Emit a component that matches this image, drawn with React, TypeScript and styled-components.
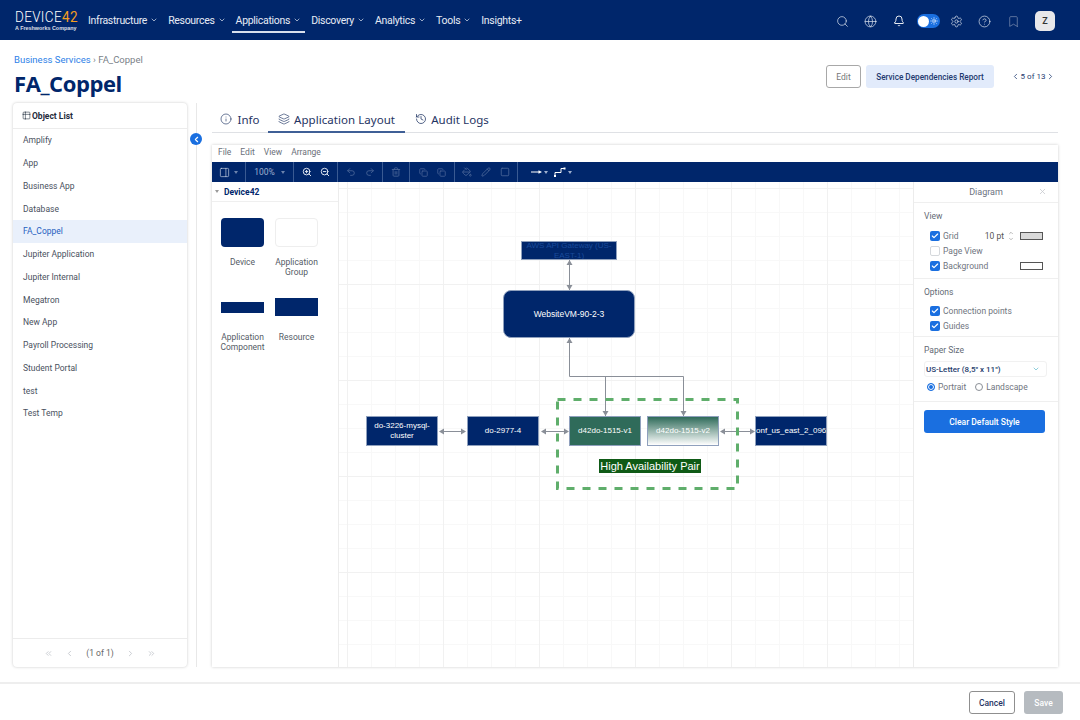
import React from "react";
import styled, { createGlobalStyle } from "styled-components";
import {
  Search,
  Globe,
  Bell,
  Settings,
  CircleHelp,
  Bookmark,
  ChevronDown,
  ChevronUp,
  ChevronLeft,
  ChevronRight,
  ChevronsLeft,
  ChevronsRight,
  Info,
  Layers,
  History,
  ZoomIn,
  ZoomOut,
  Undo2,
  Redo2,
  Trash2,
  Copy,
  PaintBucket,
  Pencil,
  Square,
  PanelRight,
  Check,
  X,
  Table2,
  Sun,
} from "lucide-react";

const navy = "#00266b";

const GlobalStyle = createGlobalStyle`
  html, body { margin: 0; padding: 0; background: #fff; overflow: hidden; }
  body { font-family: "Roboto", "Liberation Sans", sans-serif; }
  * { box-sizing: border-box; }
`;

const Page = styled.div`
  width: 1080px;
  height: 720px;
  display: flex;
  flex-direction: column;
  color: #4a5568;
`;

const Header = styled.header`
  height: 40px;
  flex: none;
  background: ${navy};
  display: flex;
  align-items: center;
  padding: 2px 25px 0 15px;
`;

const Logo = styled.div`
  width: 68px;
  color: #fff;
  display: flex;
  flex-direction: column;
  margin-top: -1px;
`;

const LogoMark = styled.div`
  font-family: "Roboto", sans-serif;
  font-weight: 300;
  font-size: 15.5px;
  line-height: 14px;
  letter-spacing: 0.4px;
  white-space: nowrap;
  transform: scaleX(0.87);
  transform-origin: left center;
  span { color: #f59e1f; font-weight: 400; }
`;

const LogoSub = styled.div`
  font-family: "Liberation Sans", sans-serif;
  font-size: 5.4px;
  line-height: 8px;
  font-weight: 700;
  opacity: 0.85;
  white-space: nowrap;
`;

const Nav = styled.nav`
  margin-left: 1px;
  display: flex;
  align-items: center;
  gap: 2px;
  height: 100%;
`;

const NavItem = styled.div<{ $active?: boolean }>`
  height: 24px;
  padding: 0 4px;
  display: flex;
  align-items: center;
  gap: 3px;
  color: #e6ebf5;
  font-family: "Roboto", sans-serif;
  font-size: 10.5px;
  letter-spacing: -0.3px;
  white-space: nowrap;
  border-bottom: 2px solid ${(p) => (p.$active ? "#d8dfec" : "transparent")};
`;

const HeaderIcons = styled.div`
  margin-left: auto;
  display: flex;
  align-items: center;
  gap: 15.5px;
  color: #dbe2ee;
`;

const Toggle = styled.div`
  width: 23px;
  height: 14px;
  border-radius: 7px;
  background: #1a6fe0;
  display: flex;
  align-items: center;
  justify-content: space-between;
  padding: 0 2px 0 1px;
  color: #fff;
  margin: 0 -5.5px 0 -3.5px;
`;

const ToggleKnob = styled.span`
  width: 11px;
  height: 11px;
  border-radius: 50%;
  background: #fff;
`;

const Avatar = styled.div`
  width: 20px;
  height: 20px;
  border-radius: 5px;
  background: #e8e8ea;
  color: #333;
  font-size: 9px;
  font-weight: 600;
  display: flex;
  align-items: center;
  justify-content: center;
`;

const Content = styled.main`
  flex: 1;
  min-height: 0;
  padding: 14px 22px 15px 13px;
  display: flex;
  flex-direction: column;
`;

const TitleRow = styled.div`
  height: 49px;
  flex: none;
  display: flex;
  justify-content: space-between;
  align-items: flex-start;
`;

const Breadcrumb = styled.div`
  padding-left: 1px;
  font-size: 9.5px;
  line-height: 12px;
  color: #7a7f88;
  a { color: #2d7fe8; text-decoration: none; }
`;

const Title = styled.h1`
  margin: 3px 0 0 1px;
  font-family: "Open Sans", sans-serif;
  font-size: 22px;
  line-height: 28px;
  font-weight: 700;
  letter-spacing: -0.4px;
  color: ${navy};
`;

const PageActions = styled.div`
  display: flex;
  align-items: center;
  margin-top: 11px;
  margin-right: 3px;
`;

const EditButton = styled.button`
  width: 35px;
  height: 23px;
  background: #fff;
  border: 1px solid #a8a8a8;
  border-radius: 3px;
  color: #777;
  font-family: inherit;
  font-size: 8.5px;
  padding: 0;
`;

const ReportButton = styled.button`
  width: 128px;
  height: 23px;
  margin-left: 5px;
  background: #e2ebfb;
  border: 0;
  border-radius: 3px;
  color: #1f3a70;
  font-family: inherit;
  font-size: 8.2px;
  font-weight: 500;
  padding: 0;
`;

const Pager = styled.div`
  width: 44px;
  margin-left: 17px;
  display: flex;
  align-items: center;
  justify-content: space-between;
  font-size: 8px;
  color: #1f3a70;
  white-space: nowrap;
`;

const Main = styled.div`
  flex: 1;
  min-height: 0;
  display: flex;
`;

const Sidebar = styled.aside`
  width: 174px;
  flex: none;
  display: flex;
  flex-direction: column;
  border-radius: 4px;
  background: #fff;
  box-shadow: 0 0 3px rgba(0, 0, 0, 0.22);
`;

const SidebarTitle = styled.div`
  height: 26px;
  flex: none;
  padding-left: 9px;
  display: flex;
  align-items: center;
  gap: 1px;
  border-bottom: 1px solid #ececec;
  color: #1e2a3a;
  font-size: 8.5px;
  font-weight: 700;
`;

const ObjectList = styled.ul`
  list-style: none;
  margin: 0;
  padding: 0;
  flex: 1;
`;

const ObjectRow = styled.li<{ $active?: boolean }>`
  height: 22.75px;
  padding-left: 10px;
  display: flex;
  align-items: center;
  font-size: 8.5px;
  color: ${(p) => (p.$active ? "#1f5fbf" : "#4a5160")};
  background: ${(p) => (p.$active ? "#e9f0fb" : "transparent")};
`;

const SidebarPager = styled.div`
  height: 29px;
  flex: none;
  border-top: 1px solid #ececec;
  display: flex;
  align-items: center;
  justify-content: center;
  gap: 11.5px;
  color: #b9bdc4;
  font-size: 8.5px;
  span { color: #666; margin: 0 1px; }
`;

const Divider = styled.div`
  position: relative;
  width: 25px;
  flex: none;
  &::after {
    content: "";
    position: absolute;
    left: 8.5px;
    top: 0;
    bottom: 0;
    width: 1px;
    background: #e8e8e8;
  }
`;

const CollapseButton = styled.div`
  position: absolute;
  z-index: 1;
  left: 3px;
  top: 30px;
  width: 12px;
  height: 12px;
  border-radius: 50%;
  background: #1a6fe0;
  color: #fff;
  display: flex;
  align-items: center;
  justify-content: center;
`;

const Workspace = styled.section`
  flex: 1;
  min-width: 0;
  display: flex;
  flex-direction: column;
`;

const Tabs = styled.div`
  height: 31px;
  flex: none;
  margin-top: -1px;
  display: flex;
  border-bottom: 1px solid #dfe1e5;
`;

const Tab = styled.div<{ $active?: boolean; $width: number; $gap: number }>`
  width: ${(p) => p.$width}px;
  padding-top: 5px;
  display: flex;
  align-items: center;
  justify-content: center;
  gap: ${(p) => p.$gap}px;
  margin-bottom: -1px;
  font-family: "Noto Sans", sans-serif;
  font-size: 11.5px;
  letter-spacing: 0.05px;
  color: #1f3463;
  border-bottom: 2px solid ${(p) => (p.$active ? "#3f5f96" : "transparent")};
`;

const Editor = styled.div`
  flex: 1;
  min-height: 0;
  margin-top: 12px;
  display: flex;
  flex-direction: column;
  background: #fff;
  box-shadow: 0 0 3px rgba(0, 0, 0, 0.2);
`;

const MenuBar = styled.div`
  height: 17px;
  flex: none;
  padding: 0 0 3px 6px;
  display: flex;
  align-items: center;
  gap: 9px;
  font-size: 8.5px;
  color: #6b7079;
`;

const Toolbar = styled.div`
  height: 20px;
  flex: none;
  background: ${navy};
  display: flex;
  align-items: center;
  color: #c7d2e6;
`;

const ToolGroup = styled.div<{ $width: number; $dim?: boolean; $gap?: number }>`
  width: ${(p) => p.$width}px;
  height: 100%;
  display: flex;
  align-items: center;
  justify-content: center;
  gap: ${(p) => p.$gap ?? 9}px;
  font-size: 8.5px;
  border-right: 1px solid #3a5a92;
  color: ${(p) => (p.$dim ? "#4b6699" : "#dfe5f1")};
  &:last-child { border-right: 0; }
`;

const ToolPair = styled.span`
  display: flex;
  align-items: center;
  gap: 2px;
`;

const ZoomLabel = styled.span`
  color: #9fb0cf;
`;

const ToolCaret = styled.span<{ $muted?: boolean }>`
  width: 0;
  height: 0;
  border-left: 2.5px solid transparent;
  border-right: 2.5px solid transparent;
  border-top: 3px solid ${(p) => (p.$muted ? "#6d84ad" : "#9fb0cf")};
`;

const EditorBody = styled.div`
  flex: 1;
  min-height: 0;
  display: flex;
`;

const Palette = styled.div`
  width: 127px;
  flex: none;
  border-right: 1px solid #ececec;
`;

const PaletteHead = styled.div`
  height: 20px;
  display: flex;
  align-items: center;
  gap: 5px;
  padding-left: 3px;
  border-bottom: 1px solid #efefef;
  font-size: 8.5px;
  font-weight: 700;
  color: ${navy};
`;

const Caret = styled.span`
  width: 0;
  height: 0;
  border-left: 2.5px solid transparent;
  border-right: 2.5px solid transparent;
  border-top: 3px solid #999;
`;

const ShapeGrid = styled.div`
  display: grid;
  grid-template-columns: 43px 43px;
  column-gap: 11px;
  padding: 15px 0 0 9px;
`;

const ShapeCell = styled.div<{ $height: number }>`
  height: ${(p) => p.$height}px;
  display: flex;
  flex-direction: column;
  align-items: center;
`;

const ShapeSlot = styled.div`
  height: 30px;
  width: 100%;
  display: flex;
  align-items: center;
`;

const Shape = styled.div<{ $height: number; $radius?: number; $blank?: boolean }>`
  width: 100%;
  height: ${(p) => p.$height}px;
  border-radius: ${(p) => p.$radius ?? 0}px;
  background: ${(p) => (p.$blank ? "#fff" : navy)};
  border: ${(p) => (p.$blank ? "1px solid #eeeeee" : "0")};
`;

const ShapeLabel = styled.div`
  margin-top: 10px;
  width: 60px;
  text-align: center;
  font-size: 8.5px;
  line-height: 10px;
  color: #555b66;
`;

const Canvas = styled.div`
  position: relative;
  flex: 1;
  min-width: 0;
  overflow: hidden;
  background-color: #fff;
  background-image:
    linear-gradient(#f1f1f1 1px, transparent 1px),
    linear-gradient(90deg, #f1f1f1 1px, transparent 1px),
    linear-gradient(#f8f8f8 1px, transparent 1px),
    linear-gradient(90deg, #f8f8f8 1px, transparent 1px);
  background-size: 96px 96px, 96px 96px, 24px 24px, 24px 24px;
  background-position: 0 6px, 8px 0, 0 6px, 8px 0;
`;

const Wires = styled.svg`
  position: absolute;
  left: 0;
  top: 0;
`;

const Node = styled.div<{
  $x: number;
  $y: number;
  $w: number;
  $h: number;
  $fill?: string;
  $radius?: number;
  $tone?: string;
  $size?: number;
  $flush?: boolean;
}>`
  position: absolute;
  left: ${(p) => p.$x}px;
  top: ${(p) => p.$y}px;
  width: ${(p) => p.$w}px;
  height: ${(p) => p.$h}px;
  background: ${(p) => p.$fill ?? navy};
  border: 1px solid #8fa0bd;
  border-radius: ${(p) => p.$radius ?? 0}px;
  color: ${(p) => p.$tone ?? "#fff"};
  font-family: "Liberation Sans", sans-serif;
  font-size: ${(p) => p.$size ?? 8}px;
  line-height: 10px;
  display: flex;
  align-items: center;
  justify-content: ${(p) => (p.$flush ? "flex-start" : "center")};
  text-align: center;
  overflow: hidden;
  white-space: ${(p) => (p.$flush ? "nowrap" : "normal")};
`;

const HaLabel = styled.div`
  position: absolute;
  left: 260px;
  top: 277px;
  width: 102px;
  height: 14px;
  background: #0f5a16;
  color: #fff;
  font-family: "Liberation Sans", sans-serif;
  font-size: 11px;
  line-height: 14px;
  text-align: center;
  white-space: nowrap;
`;

const Inspector = styled.div`
  width: 145px;
  flex: none;
  border-left: 1px solid #ececec;
  font-size: 8.5px;
  color: #6f7580;
`;

const InspectorHead = styled.div`
  position: relative;
  height: 21px;
  display: flex;
  align-items: center;
  justify-content: center;
  border-bottom: 1px solid #efefef;
  color: #6b7280;
  font-size: 9px;
`;

const CloseIcon = styled.span`
  position: absolute;
  right: 11px;
  top: 5px;
  color: #c4c7cc;
`;

const Section = styled.div<{ $height: number }>`
  height: ${(p) => p.$height}px;
  padding: 8px 10px 0;
  border-bottom: 1px solid #efefef;
  &:last-child { border-bottom: 0; }
`;

const SectionTitle = styled.div<{ $tight?: boolean }>`
  height: 10px;
  line-height: 10px;
  font-size: 8.5px;
  color: #636a75;
  margin-bottom: ${(p) => (p.$tight ? 6 : 7)}px;
`;

const CheckRow = styled.div`
  height: 15px;
  padding: 0 5px 0 6px;
  display: flex;
  align-items: center;
  gap: 3px;
`;

const Box = styled.span<{ $on?: boolean }>`
  width: 10px;
  height: 10px;
  border-radius: 2px;
  flex: none;
  display: flex;
  align-items: center;
  justify-content: center;
  color: #fff;
  background: ${(p) => (p.$on ? "#1a6fe0" : "#fff")};
  border: ${(p) => (p.$on ? "0" : "1px solid #d5d8dc")};
`;

const Spacer = styled.span`
  flex: 1;
`;

const PtValue = styled.span`
  font-size: 8.5px;
  color: #555;
  margin-right: 1px;
`;

const Stepper = styled.span`
  display: flex;
  flex-direction: column;
  color: #777;
  margin-right: 3px;
`;

const Swatch = styled.span<{ $fill: string }>`
  width: 23px;
  height: 8px;
  border: 1px solid #555;
  background: ${(p) => p.$fill};
  flex: none;
`;

const PaperSelect = styled.div`
  height: 16px;
  width: 123px;
  margin-top: -1px;
  display: flex;
  align-items: center;
  justify-content: space-between;
  padding: 0 6px 0 1px;
  border: 1px solid #f1f1f1;
  border-radius: 3px;
  color: #243b6b;
  font-size: 8px;
  font-weight: 500;
  svg { color: #56b7c9; }
`;

const RadioRow = styled.div`
  margin-top: 3px;
  padding-left: 3px;
  display: flex;
  align-items: center;
  gap: 3px;
  height: 14px;
`;

const Radio = styled.span<{ $on?: boolean }>`
  width: 8px;
  height: 8px;
  border-radius: 50%;
  border: 1px solid ${(p) => (p.$on ? "#1a6fe0" : "#8a8f96")};
  box-shadow: ${(p) => (p.$on ? "inset 0 0 0 1px #fff" : "none")};
  background: ${(p) => (p.$on ? "#1a6fe0" : "#fff")};
  flex: none;
  margin-left: ${(p) => (p.$on ? "0" : "6px")};
`;

const ClearButton = styled.button`
  display: block;
  width: 121px;
  height: 23px;
  background: #1a6fe0;
  border: 0;
  border-radius: 3px;
  color: #fff;
  font-family: inherit;
  font-size: 8.5px;
  font-weight: 500;
  padding: 0;
`;

const Footer = styled.footer`
  height: 38px;
  flex: none;
  border-top: 2px solid #eeeeee;
  padding: 7px 17px 0 0;
  display: flex;
  justify-content: flex-end;
  gap: 9px;
`;

const CancelButton = styled.button`
  width: 46px;
  height: 23px;
  background: #fff;
  border: 1px solid #8f8f8f;
  border-radius: 3px;
  color: #1f3463;
  font-family: inherit;
  font-size: 8.5px;
  font-weight: 500;
  padding: 0;
`;

const SaveButton = styled.button`
  width: 39px;
  height: 23px;
  background: #b6bbc0;
  border: 0;
  border-radius: 3px;
  color: #fff;
  font-family: inherit;
  font-size: 8.5px;
  font-weight: 500;
  padding: 0;
`;

const navItems = [
  { label: "Infrastructure", caret: true },
  { label: "Resources", caret: true },
  { label: "Applications", caret: true, active: true },
  { label: "Discovery", caret: true },
  { label: "Analytics", caret: true },
  { label: "Tools", caret: true },
  { label: "Insights+", caret: false },
];

const objects = [
  "Amplify",
  "App",
  "Business App",
  "Database",
  "FA_Coppel",
  "Jupiter Application",
  "Jupiter Internal",
  "Megatron",
  "New App",
  "Payroll Processing",
  "Student Portal",
  "test",
  "Test Temp",
];

const Arrow = ({ d }: { d: string }) => (
  <path d={d} fill="#8a8f98" stroke="none" />
);

const TickedBox = () => (
  <Box $on>
    <Check size={8} strokeWidth={3.5} />
  </Box>
);

// the arrow and elbow connector glyphs of the drawing toolbar
const StraightEdge = () => (
  <svg width="11" height="8" viewBox="0 0 11 8">
    <path d="M0 4h8" stroke="#fff" strokeWidth="1" />
    <path d="M11 4L7.5 2.2v3.6z" fill="#fff" />
  </svg>
);

const ElbowEdge = () => (
  <svg width="12" height="10" viewBox="0 0 12 10">
    <path d="M1 9V5.5h6V1.5h3" fill="none" stroke="#fff" strokeWidth="1" />
    <rect x="0" y="8" width="2" height="2" fill="#fff" />
    <rect x="9.5" y="0.5" width="2" height="2" fill="#fff" />
  </svg>
);

const App: React.FC = () => {
  return (
    <Page>
      <GlobalStyle />
      <Header>
        <Logo>
          <LogoMark>
            DEVICE<span>42</span>
          </LogoMark>
          <LogoSub>A Freshworks Company</LogoSub>
        </Logo>
        <Nav>
          {navItems.map((item) => (
            <NavItem key={item.label} $active={item.active}>
              {item.label}
              {item.caret && <ChevronDown size={8} strokeWidth={2} />}
            </NavItem>
          ))}
        </Nav>
        <HeaderIcons>
          <Search size={13} strokeWidth={1.3} />
          <Globe size={13} strokeWidth={1.3} />
          <Bell size={12} strokeWidth={1.8} color="#fff" />
          <Toggle>
            <ToggleKnob />
            <Sun size={8} strokeWidth={2} />
          </Toggle>
          <Settings size={13} strokeWidth={1.3} />
          <CircleHelp size={13} strokeWidth={1.3} />
          <Bookmark size={13} strokeWidth={1.3} color="#7f90b2" />
          <Avatar>Z</Avatar>
        </HeaderIcons>
      </Header>
      <Content>
        <TitleRow>
          <div>
            <Breadcrumb>
              <a href="#">Business Services</a> › FA_Coppel
            </Breadcrumb>
            <Title>FA_Coppel</Title>
          </div>
          <PageActions>
            <EditButton>Edit</EditButton>
            <ReportButton>Service Dependencies Report</ReportButton>
            <Pager>
              <ChevronLeft size={9} />
              5 of 13
              <ChevronRight size={9} />
            </Pager>
          </PageActions>
        </TitleRow>
        <Main>
          <Sidebar>
            <SidebarTitle>
              <Table2 size={9} strokeWidth={1.5} />
              Object List
            </SidebarTitle>
            <ObjectList>
              {objects.map((name) => (
                <ObjectRow key={name} $active={name === "FA_Coppel"}>
                  {name}
                </ObjectRow>
              ))}
            </ObjectList>
            <SidebarPager>
              <ChevronsLeft size={9} />
              <ChevronLeft size={9} />
              <span>(1 of 1)</span>
              <ChevronRight size={9} />
              <ChevronsRight size={9} />
            </SidebarPager>
          </Sidebar>
          <Divider>
            <CollapseButton>
              <ChevronLeft size={9} strokeWidth={3} />
            </CollapseButton>
          </Divider>
          <Workspace>
            <Tabs>
              <Tab $width={56} $gap={5}>
                <Info size={12} strokeWidth={1.3} />
                Info
              </Tab>
              <Tab $width={137} $gap={4} $active>
                <Layers size={12} strokeWidth={1.3} />
                Application Layout
              </Tab>
              <Tab $width={94} $gap={4}>
                <History size={12} strokeWidth={1.5} />
                Audit Logs
              </Tab>
            </Tabs>
            <Editor>
              <MenuBar>
                <span>File</span>
                <span>Edit</span>
                <span>View</span>
                <span>Arrange</span>
              </MenuBar>
              <Toolbar>
                <ToolGroup $width={34} $gap={4}>
                  <PanelRight size={11} strokeWidth={1.3} />
                  <ToolCaret $muted />
                </ToolGroup>
                <ToolGroup $width={48} $gap={6}>
                  <ZoomLabel>100%</ZoomLabel>
                  <ToolCaret $muted />
                </ToolGroup>
                <ToolGroup $width={44} $gap={8}>
                  <ZoomIn size={10} strokeWidth={2.4} />
                  <ZoomOut size={10} strokeWidth={2.4} />
                </ToolGroup>
                <ToolGroup $width={45} $dim>
                  <Undo2 size={10} />
                  <Redo2 size={10} />
                </ToolGroup>
                <ToolGroup $width={27} $dim>
                  <Trash2 size={10} />
                </ToolGroup>
                <ToolGroup $width={45} $dim>
                  <Copy size={9} />
                  <Copy size={9} />
                </ToolGroup>
                <ToolGroup $width={63} $dim>
                  <PaintBucket size={10} />
                  <Pencil size={10} />
                  <Square size={10} />
                </ToolGroup>
                <ToolGroup $width={66} $gap={6}>
                  <ToolPair>
                    <StraightEdge />
                    <ToolCaret />
                  </ToolPair>
                  <ToolPair>
                    <ElbowEdge />
                    <ToolCaret />
                  </ToolPair>
                </ToolGroup>
              </Toolbar>
              <EditorBody>
                <Palette>
                  <PaletteHead>
                    <Caret />
                    Device42
                  </PaletteHead>
                  <ShapeGrid>
                    <ShapeCell $height={75}>
                      <ShapeSlot>
                        <Shape $height={29} $radius={4} />
                      </ShapeSlot>
                      <ShapeLabel>Device</ShapeLabel>
                    </ShapeCell>
                    <ShapeCell $height={75}>
                      <ShapeSlot>
                        <Shape $height={29} $radius={4} $blank />
                      </ShapeSlot>
                      <ShapeLabel>Application Group</ShapeLabel>
                    </ShapeCell>
                    <ShapeCell $height={64}>
                      <ShapeSlot>
                        <Shape $height={11} />
                      </ShapeSlot>
                      <ShapeLabel>Application Component</ShapeLabel>
                    </ShapeCell>
                    <ShapeCell $height={64}>
                      <ShapeSlot>
                        <Shape $height={18} />
                      </ShapeSlot>
                      <ShapeLabel>Resource</ShapeLabel>
                    </ShapeCell>
                  </ShapeGrid>
                </Palette>
                <Canvas>
                  <Wires width={574} height={484}>
                    <g stroke="#8a8f98" strokeWidth="1" fill="none">
                      <path d="M230.5 78V108" />
                      <path d="M230.5 156V194.5H344.5V234" />
                      <path d="M266.5 194.5V234" />
                      <path d="M101 249.5H125" />
                      <path d="M203 249.5H227" />
                      <path d="M383 249.5H413" />
                    </g>
                    <Arrow d="M230.5 78l-3 5h6z" />
                    <Arrow d="M230.5 108l-3-5h6z" />
                    <Arrow d="M230.5 156l-3 5h6z" />
                    <Arrow d="M266.5 234l-3-5h6z" />
                    <Arrow d="M344.5 234l-3-5h6z" />
                    <Arrow d="M100 249.5l5-3v6z" />
                    <Arrow d="M127 249.5l-5-3v6z" />
                    <Arrow d="M202 249.5l5-3v6z" />
                    <Arrow d="M230 249.5l-5-3v6z" />
                    <Arrow d="M381 249.5l5-3v6z" />
                    <Arrow d="M416 249.5l-5-3v6z" />
                    <rect
                      x="218.5"
                      y="217.5"
                      width="180"
                      height="89"
                      fill="none"
                      stroke="#5fae6b"
                      strokeWidth="3"
                      strokeDasharray="8 8"
                    />
                  </Wires>
                  <Node $x={182} $y={59} $w={96} $h={19} $tone="#1a4a9a">
                    AWS API Gateway (US-EAST-1)
                  </Node>
                  <Node $x={164} $y={108} $w={132} $h={48} $radius={8} $size={8.5}>
                    WebsiteVM-90-2-3
                  </Node>
                  <Node $x={27} $y={234} $w={72} $h={30}>
                    do-3226-mysql-cluster
                  </Node>
                  <Node $x={128} $y={234} $w={72} $h={30}>
                    do-2977-4
                  </Node>
                  <Node $x={230} $y={234} $w={72} $h={30} $fill="#2f6b5a">
                    d42do-1515-v1
                  </Node>
                  <Node
                    $x={308}
                    $y={234}
                    $w={72}
                    $h={30}
                    $fill="linear-gradient(#2f6b5a, #ffffff)"
                  >
                    d42do-1515-v2
                  </Node>
                  <Node $x={416} $y={234} $w={72} $h={30} $flush>
                    onf_us_east_2_0968
                  </Node>
                  <HaLabel>High Availability Pair</HaLabel>
                </Canvas>
                <Inspector>
                  <InspectorHead>
                    Diagram
                    <CloseIcon>
                      <X size={9} />
                    </CloseIcon>
                  </InspectorHead>
                  <Section $height={76}>
                    <SectionTitle>View</SectionTitle>
                    <CheckRow>
                      <TickedBox />
                      Grid
                      <Spacer />
                      <PtValue>10 pt</PtValue>
                      <Stepper>
                        <ChevronUp size={6} />
                        <ChevronDown size={6} />
                      </Stepper>
                      <Swatch $fill="#d9d9d9" />
                    </CheckRow>
                    <CheckRow>
                      <Box />
                      Page View
                    </CheckRow>
                    <CheckRow>
                      <TickedBox />
                      Background
                      <Spacer />
                      <Swatch $fill="#ffffff" />
                    </CheckRow>
                  </Section>
                  <Section $height={58}>
                    <SectionTitle $tight>Options</SectionTitle>
                    <CheckRow>
                      <TickedBox />
                      Connection points
                    </CheckRow>
                    <CheckRow>
                      <TickedBox />
                      Guides
                    </CheckRow>
                  </Section>
                  <Section $height={65}>
                    <SectionTitle>Paper Size</SectionTitle>
                    <PaperSelect>
                      US-Letter (8,5" x 11")
                      <ChevronDown size={8} />
                    </PaperSelect>
                    <RadioRow>
                      <Radio $on />
                      Portrait
                      <Radio />
                      Landscape
                    </RadioRow>
                  </Section>
                  <Section $height={50}>
                    <ClearButton>Clear Default Style</ClearButton>
                  </Section>
                </Inspector>
              </EditorBody>
            </Editor>
          </Workspace>
        </Main>
      </Content>
      <Footer>
        <CancelButton>Cancel</CancelButton>
        <SaveButton>Save</SaveButton>
      </Footer>
    </Page>
  );
};

export default App;
